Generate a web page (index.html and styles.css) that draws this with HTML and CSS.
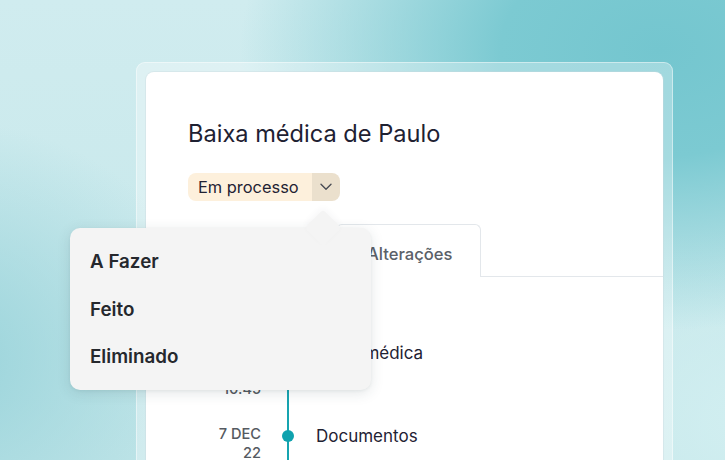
FILE: index.html
```html
<!DOCTYPE html>
<html lang="pt">
<head>
<meta charset="utf-8">
<title>Baixa médica de Paulo</title>
<link rel="stylesheet" href="styles.css">
</head>
<body>
<div class="frame">
  <div class="card">
    <h1 class="title">Baixa médica de Paulo</h1>
    <div class="status">
      <span class="status-label">Em processo</span>
      <span class="status-toggle">
        <svg width="12" height="8" viewBox="0 0 12 8"><path d="M1 1.2l5 5 5-5" fill="none" stroke="#4a4d55" stroke-width="1.4" stroke-linecap="round" stroke-linejoin="round"/></svg>
      </span>
    </div>
    <div class="tabs">
      <div class="tab">Detalhes</div>
      <div class="tab tab-active">Alterações</div>
      <div class="tab-fill"></div>
    </div>
    <div class="timeline">
      <div class="row">
        <div class="date">7 DEC<br>22<br>10.45</div>
        <div class="rail"><span class="dot"></span></div>
        <div class="event">Baixa médica</div>
      </div>
      <div class="row">
        <div class="date">7 DEC<br>22<br>10.45</div>
        <div class="rail"><span class="dot"></span></div>
        <div class="event">Documentos</div>
      </div>
    </div>
  </div>
</div>
<div class="menu">
  <div class="menu-item">A Fazer</div>
  <div class="menu-item">Feito</div>
  <div class="menu-item">Eliminado</div>
</div>
</body>
</html>
```
FILE: styles.css
```css
html, body {
  margin: 0;
  padding: 0;
}
body {
  position: relative;
  width: 725px;
  height: 460px;
  overflow: hidden;
  font-family: Inter, "Noto Sans", sans-serif;
  background:
    radial-gradient(ellipse 420px 280px at 660px 50px, #74c6cf 0%, #7ccad2 38%, rgba(124,202,210,0) 100%),
    radial-gradient(ellipse 280px 240px at -60px 360px, #98d3da 0%, rgba(152,211,218,0) 100%),
    radial-gradient(ellipse 260px 200px at 760px 420px, #d2eff1 0%, rgba(210,239,241,0) 100%),
    linear-gradient(#d0ecef, #c3e6e9);
}
.frame {
  margin: 62px 0 0 136px;
  width: 517px;
  height: 420px;
  padding: 10px;
  border-radius: 9px;
  background: rgba(255,255,255,0.32);
  box-shadow: inset 0 0 0 1px rgba(255,255,255,0.45);
}
.card {
  height: 430px;
  background: #ffffff;
  border-radius: 8px;
  padding: 48px 0 0 42px;
  box-sizing: border-box;
  box-shadow: 0 0 0 1px rgba(200,215,220,0.35);
}
.title {
  margin: 0;
  font-size: 23.6px;
  line-height: 28px;
  font-weight: 400;
  color: #1e2132;
}
.status {
  display: inline-flex;
  margin-top: 25px;
  height: 28px;
  border-radius: 8px;
  overflow: hidden;
  vertical-align: top;
}
.status-label {
  background: #fdf0dc;
  padding: 0 13px 0 10px;
  font-size: 16.4px;
  line-height: 28px;
  color: #1f2233;
}
.status-toggle {
  width: 28px;
  background: #ebe0cd;
  display: flex;
  align-items: center;
  justify-content: center;
}
.tabs {
  display: flex;
  margin-top: 23px;
  height: 53px;
}
.tab {
  width: 148px;
  box-sizing: border-box;
  border-bottom: 1px solid #e3e7eb;
  font-size: 16.6px;
  font-weight: 500;
  color: #5b6068;
  line-height: 52px;
  padding-left: 32px;
}
.tab-active {
  width: 145px;
  border: 1px solid #e3e7eb;
  border-bottom: none;
  border-radius: 6px 6px 0 0;
  padding-left: 30px;
  line-height: 58px;
}
.tab-fill {
  flex: 1;
  border-bottom: 1px solid #e3e7eb;
}
.timeline {
  margin-top: 64px;
}
.row {
  display: flex;
  align-items: stretch;
}
.date {
  width: 73px;
  text-align: right;
  font-size: 14.6px;
  line-height: 19px;
  font-weight: 500;
  color: #555a61;
  padding: 1px 0 24.5px;
  margin-right: 21px;
}
.rail {
  width: 12px;
  margin-right: 22px;
  background: linear-gradient(to right, transparent 5px, #17a4b0 5px, #17a4b0 7px, transparent 7px);
}
.dot {
  display: block;
  width: 12px;
  height: 12px;
  margin-top: 6px;
  border-radius: 50%;
  background: #0fa2ae;
}
.event {
  font-size: 17px;
  line-height: 24px;
  color: #1f2233;
}
.menu {
  position: absolute;
  left: 70px;
  top: 228px;
  width: 301px;
  height: 162px;
  box-sizing: border-box;
  padding: 10px 20px 0;
  background: #f4f4f4;
  border-radius: 10px;
  box-shadow: 0 3px 14px rgba(40,60,70,0.13), 0 1px 3px rgba(40,60,70,0.06);
}
.menu::before {
  content: "";
  position: absolute;
  left: 240px;
  top: -13px;
  width: 26px;
  height: 26px;
  background: #f4f4f4;
  border-radius: 4px;
  transform: rotate(45deg);
  box-shadow: -2px -2px 6px rgba(40,60,70,0.04);
}
.menu-item {
  position: relative;
  height: 47.5px;
  line-height: 47.5px;
  font-size: 18.8px;
  font-weight: 600;
  color: #25282d;
}
```
